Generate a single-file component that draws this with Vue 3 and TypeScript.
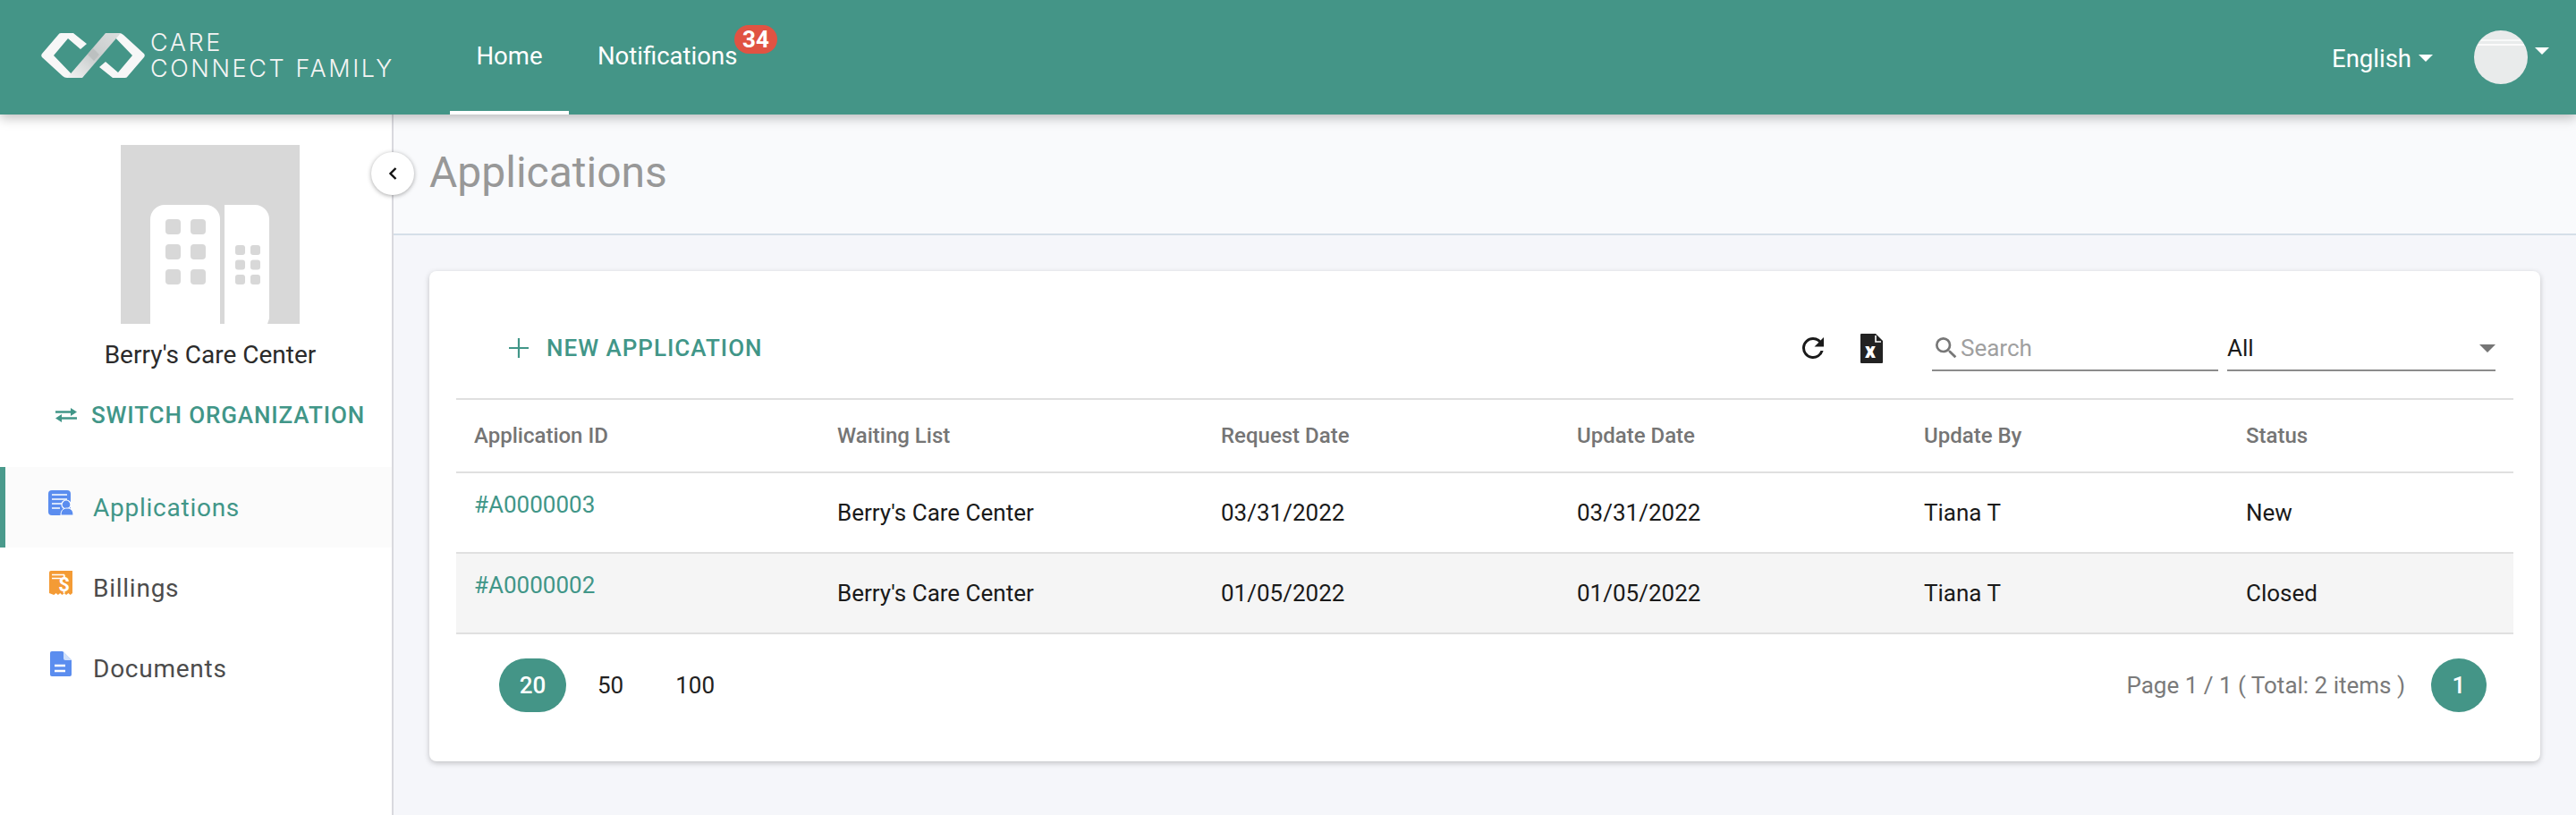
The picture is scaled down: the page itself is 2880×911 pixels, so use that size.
<template>
  <div class="app">
    <header class="topbar">
      <div class="brand">
        <svg class="brand-mark" viewBox="0 0 116 50" width="116" height="50">
          <defs>
            <linearGradient id="band" x1="0" y1="1" x2="1" y2="0">
              <stop offset="0" stop-color="#f2f3f3" />
              <stop offset="0.5" stop-color="#c8cccc" />
              <stop offset="1" stop-color="#dcdede" />
            </linearGradient>
          </defs>
          <path d="M22 0H36L51 12L44 18L30 6L14 25L38 50H29Q26 50 24 48L1 27Q-.5 25 1 23L19 2Q20 0 22 0Z" fill="#f7f7f7" />
          <path d="M94 50H80L65 38L72 32L86 44L102 25L78 0H87Q90 0 92 2L115 23Q116.500 25 115 27L97 48Q96 50 94 50Z" fill="#f7f7f7" />
          <path d="M29 50 72 0H89L46 50Z" fill="url(#band)" />
          <path d="M52 24 58 17 65 24 59 31Z" fill="#bcc0c0" />
        </svg>
        <div class="brand-text">
          <span>CARE</span>
          <span>CONNECT FAMILY</span>
        </div>
      </div>
      <nav class="nav">
        <a class="nav-item active">Home</a>
        <a class="nav-item">
          Notifications
          <span class="badge">34</span>
        </a>
      </nav>
      <div class="topbar-right">
        <span class="lang">English<i class="caret"></i></span>
        <span class="avatar"></span>
        <i class="caret avatar-caret"></i>
      </div>
    </header>

    <div class="body">
      <aside class="sidebar">
        <div class="org-photo">
          <svg viewBox="0 0 200 200" width="200" height="200">
            <path d="M33 200V83a16 16 0 0 1 16-16h46a16 16 0 0 1 16 16v117z" fill="#fff" />
            <path d="M116 200V67h34a16 16 0 0 1 16 16v111l-2 6z" fill="#fff" transform="translate(0 0)" />
            <rect
              v-for="w in bigWindows"
              :key="w.key"
              :x="w.x"
              :y="w.y"
              width="17"
              height="17"
              rx="4"
              fill="#d8d8d8"
            />
            <rect
              v-for="w in smallWindows"
              :key="w.key"
              :x="w.x"
              :y="w.y"
              width="11"
              height="11"
              rx="3"
              fill="#d8d8d8"
            />
          </svg>
        </div>
        <div class="org-name">Berry's Care Center</div>
        <a class="switch-org">
          <svg viewBox="0 0 24 18" width="24" height="18">
            <path d="M0 5.500h18M24 12.500H6" fill="none" stroke="#419688" stroke-width="2.400" />
            <path d="M17 1l7 4.500-7 4.500zM7 8l-7 4.500 7 4.500z" fill="#419688" />
          </svg>
          SWITCH ORGANIZATION
        </a>
        <ul class="menu">
          <li class="menu-item selected">
            <svg viewBox="0 0 28 28" width="28" height="28">
              <rect x="0" y="0" width="25" height="28" rx="4" fill="#5b8def" />
              <path d="M4 5h17M4 10h17M4 15h12M4 20h9" stroke="#fff" stroke-width="1.500" />
              <circle cx="20" cy="16" r="5" fill="#5b8def" stroke="#fff" stroke-width="1.200" />
              <path d="M14 28c0-6 3-8 7-8s7 2 7 8z" fill="#5b8def" stroke="#fff" stroke-width="1" />
            </svg>
            <span>Applications</span>
          </li>
          <li class="menu-item">
            <svg viewBox="0 0 28 28" width="28" height="28">
              <path d="M1 2a2 2 0 0 1 2-2h24v25l-2.300 2-2.300-2-2.300 2-2.300-2-2.300 2-2.300-2-2.300 2-2.300-2-2.300 2L1 25z" fill="#f49b35" />
              <path d="M4 4.500h14M4 8.500h10" stroke="#fff" stroke-width="1.500" />
              <text x="18" y="23" text-anchor="middle" class="dollar">$</text>
            </svg>
            <span>Billings</span>
          </li>
          <li class="menu-item">
            <svg viewBox="0 0 28 28" width="28" height="28">
              <path d="M4 0h12l10 10v16a2 2 0 0 1-2 2H4a2 2 0 0 1-2-2V2a2 2 0 0 1 2-2z" fill="#5b8def" />
              <path d="M17 0v8a2 2 0 0 0 2 2h7z" fill="#cfe0fb" />
              <path d="M7 16h12M7 22h12" stroke="#fff" stroke-width="2.500" />
            </svg>
            <span>Documents</span>
          </li>
        </ul>
      </aside>

      <button class="collapse-btn">
        <svg viewBox="0 0 12 16" width="12" height="16">
          <path d="M9.500 2 3.500 8l6 6" fill="none" stroke="#111" stroke-width="2.400" />
        </svg>
      </button>

      <main class="content">
        <div class="page-head">
          <h1>Applications</h1>
        </div>
        <section class="card">
          <div class="toolbar">
            <a class="new-btn">
              <svg viewBox="0 0 22 22" width="22" height="22">
                <path d="M11 0v22M0 11h22" stroke="#419688" stroke-width="2.200" />
              </svg>
              NEW APPLICATION
            </a>
            <svg class="refresh" viewBox="0 0 24 24" width="36" height="36">
              <path
                d="M17.650 6.350A7.950 7.950 0 0 0 12 4a8 8 0 1 0 7.730 10h-2.080A6 6 0 1 1 12 6c1.660 0 3.140.690 4.220 1.780L13 11h7V4z"
                fill="#1a1a1a"
              />
            </svg>
            <svg class="excel" viewBox="0 0 25 33" width="25" height="33">
              <path d="M1 0h16l8 8v24a1 1 0 0 1-1 1H1a1 1 0 0 1-1-1V1a1 1 0 0 1 1-1z" fill="#222" />
              <path d="M17 2v7h6" fill="none" stroke="#fff" stroke-width="1.600" />
              <text x="11" y="27" text-anchor="middle" class="excel-x">x</text>
            </svg>
            <label class="search">
              <svg viewBox="0 0 24 24" width="32" height="32">
                <path
                  d="M15.500 14h-.790l-.280-.270A6.470 6.470 0 0 0 16 9.500 6.500 6.500 0 1 0 9.500 16c1.610 0 3.090-.590 4.230-1.570l.270.280v.790l5 4.990L20.490 19zm-6 0A4.490 4.490 0 0 1 5 9.500 4.490 4.490 0 0 1 9.500 5 4.490 4.490 0 0 1 14 9.500 4.490 4.490 0 0 1 9.500 14z"
                  fill="#777"
                />
              </svg>
              <input placeholder="Search" />
            </label>
            <div class="status-select">
              <span>All</span>
              <i class="select-arrow"></i>
            </div>
          </div>

          <table class="grid">
            <colgroup>
              <col v-for="w in colWidths" :key="w" :style="{ width: w + 'px' }" />
            </colgroup>
            <thead>
              <tr>
                <th v-for="h in headers" :key="h">{{ h }}</th>
              </tr>
            </thead>
            <tbody>
              <tr v-for="(row, i) in rows" :key="row.id" :class="{ striped: i % 2 === 1 }">
                <td class="id-cell"><a>{{ row.id }}</a></td>
                <td>{{ row.list }}</td>
                <td>{{ row.requested }}</td>
                <td>{{ row.updated }}</td>
                <td>{{ row.by }}</td>
                <td>{{ row.status }}</td>
              </tr>
            </tbody>
          </table>

          <div class="pager">
            <div class="sizes">
              <span v-for="s in pageSizes" :key="s" class="size" :class="{ current: s === 20 }">{{ s }}</span>
            </div>
            <div class="page-info">
              <span>Page 1 / 1 ( Total: 2 items )</span>
              <span class="page-num">1</span>
            </div>
          </div>
        </section>
      </main>
    </div>
  </div>
</template>

<script setup lang="ts">
interface Row {
  id: string
  list: string
  requested: string
  updated: string
  by: string
  status: string
}

const headers = ['Application ID', 'Waiting List', 'Request Date', 'Update Date', 'Update By', 'Status']
const colWidths = [406, 429, 398, 388, 360, 319]
const pageSizes = [20, 50, 100]

const rows: Row[] = [
  {
    id: '#A0000003',
    list: "Berry's Care Center",
    requested: '03/31/2022',
    updated: '03/31/2022',
    by: 'Tiana T',
    status: 'New'
  },
  {
    id: '#A0000002',
    list: "Berry's Care Center",
    requested: '01/05/2022',
    updated: '01/05/2022',
    by: 'Tiana T',
    status: 'Closed'
  }
]

// 楼的窗户
const bigWindows = [0, 1, 2].flatMap((r) =>
  [0, 1].map((c) => ({ key: `${r}-${c}`, x: 50 + c * 28, y: 83 + r * 28 }))
)
const smallWindows = [0, 1, 2].flatMap((r) =>
  [0, 1].map((c) => ({ key: `${r}-${c}`, x: 128 + c * 17, y: 112 + r * 16.500 }))
)
</script>

<style>
html,
body {
  margin: 0;
  background: #f5f6fa;
}
</style>

<style scoped>
.app {
  height: 911px;
  overflow: hidden;
  display: flex;
  flex-direction: column;
  font-family: Roboto, 'Liberation Sans', sans-serif;
  color: #212121;
}

.topbar {
  height: 128px;
  flex: none;
  display: flex;
  align-items: stretch;
  background: #449587;
  color: #fff;
  box-shadow: 0 4px 12px rgba(0, 0, 0, 0.25);
  position: relative;
  z-index: 2;
}

.brand {
  display: flex;
  align-items: center;
  gap: 6px;
  padding: 0 0 4px 46px;
  width: 457px;
  box-sizing: border-box;
}

.brand-mark {
  flex: none;
}

.brand-text {
  display: flex;
  flex-direction: column;
  font-family: Inter, sans-serif;
  font-weight: 300;
  font-size: 27px;
  line-height: 29px;
  letter-spacing: 2.600px;
  color: #f4f4f4;
  white-space: nowrap;
}

.nav {
  display: flex;
  margin-left: 46px;
}

.nav-item {
  position: relative;
  display: flex;
  align-items: center;
  justify-content: center;
  font-size: 27.500px;
  padding: 0 30px 4px;
  box-sizing: border-box;
}

.nav-item.active {
  width: 133px;
  padding: 0;
  margin-right: 32px;
  border-bottom: 4px solid #fff;
}

.nav-item + .nav-item {
  padding-left: 0;
}

.badge {
  position: absolute;
  left: 153px;
  top: 28px;
  width: 48px;
  height: 32px;
  border-radius: 16px;
  background: #e05343;
  font-size: 26px;
  font-weight: 700;
  line-height: 32px;
  text-align: center;
}

.topbar-right {
  margin-left: auto;
  display: flex;
  align-items: center;
  padding-right: 30px;
}

.lang {
  display: flex;
  align-items: center;
  font-size: 27.500px;
  margin-top: 2px;
  margin-right: 46px;
}

.caret {
  display: inline-block;
  width: 0;
  height: 0;
  border-left: 8px solid transparent;
  border-right: 8px solid transparent;
  border-top: 8px solid #fff;
  margin-left: 8px;
}

.avatar {
  width: 60px;
  height: 60px;
  border-radius: 50%;
  background: linear-gradient(
    to bottom,
    #e9ebeb 0 10px,
    #f8f9f9 10px 12px,
    #e9ebeb 12px 15px,
    #fbfbfb 15px 17px,
    #e9ebeb 17px
  );
}

.avatar-caret {
  margin-bottom: 14px;
}

.body {
  flex: 1;
  min-height: 0;
  display: flex;
  position: relative;
}

.sidebar {
  width: 440px;
  flex: none;
  box-sizing: border-box;
  background: #fff;
  border-right: 2px solid #d9d9de;
  display: flex;
  flex-direction: column;
  align-items: center;
  padding: 34px 0 0 32px;
}

.org-photo {
  width: 200px;
  height: 200px;
  background: #d8d8d8;
}

.org-photo svg {
  display: block;
}

.org-name {
  margin-top: 18px;
  font-size: 28px;
  line-height: 34px;
  color: #2b2b2b;
}

.switch-org {
  margin-top: 34px;
  display: flex;
  align-items: center;
  gap: 16px;
  font-size: 26px;
  font-weight: 500;
  letter-spacing: 0.900px;
  line-height: 32px;
  color: #419688;
  white-space: nowrap;
}

.menu {
  list-style: none;
  margin: 42px 0 0 -32px;
  padding: 0;
  width: calc(100% + 32px);
}

.menu-item {
  height: 90px;
  box-sizing: border-box;
  display: flex;
  align-items: center;
  gap: 22px;
  padding-left: 54px;
  font-size: 28px;
  letter-spacing: 0.750px;
  color: #4c4c4c;
}

.menu-item svg {
  flex: none;
  margin-bottom: 10px;
}

.menu-item.selected {
  background: #fbfbfb;
  border-left: 6px solid #4a9a8c;
  padding-left: 48px;
  color: #419688;
}

.dollar {
  font-family: Roboto, sans-serif;
  font-weight: 700;
  font-size: 22px;
  fill: #fff;
}

.excel-x {
  font-family: Roboto, sans-serif;
  font-weight: 900;
  font-size: 23px;
  fill: #fff;
}

.collapse-btn {
  position: absolute;
  left: 415px;
  top: 42px;
  width: 48px;
  height: 48px;
  padding: 0;
  border: none;
  border-radius: 50%;
  background: #fff;
  box-shadow: 0 1px 5px rgba(0, 0, 0, 0.35);
  display: flex;
  align-items: center;
  justify-content: center;
}

.content {
  flex: 1;
  min-width: 0;
}

.page-head {
  height: 135px;
  box-sizing: border-box;
  background: #f9fafc;
  border-bottom: 2px solid #d5dfe8;
  padding: 0 40px 4px;
  display: flex;
  align-items: center;
}

.page-head h1 {
  margin: 0;
  font-size: 48px;
  font-weight: 400;
  color: #989898;
}

.card {
  margin: 40px 40px 0;
  width: 2360px;
  height: 548px;
  box-sizing: border-box;
  background: #fff;
  border-radius: 8px;
  box-shadow: 0 2px 6px rgba(0, 0, 0, 0.22);
  padding: 0 30px;
}

.toolbar {
  height: 142px;
  display: flex;
  align-items: center;
  padding: 30px 20px 0 59px;
  box-sizing: border-box;
}

.new-btn {
  display: flex;
  align-items: center;
  gap: 20px;
  font-size: 26px;
  font-weight: 500;
  letter-spacing: 1px;
  color: #419688;
  margin-right: auto;
}

.refresh {
  margin-right: 35px;
}

.excel {
  margin-right: 55px;
}

.search {
  width: 320px;
  height: 50px;
  margin-right: 10px;
  border-bottom: 2px solid #8c8c8c;
  display: flex;
  align-items: center;
  gap: 0;
  padding-left: 0;
  box-sizing: border-box;
  margin-top: 2px;
}

.search input {
  border: none;
  outline: none;
  background: none;
  padding: 0;
  width: 240px;
  font-family: inherit;
  font-size: 26px;
  color: #212121;
}

.search input::placeholder {
  color: #a0a0a0;
  opacity: 1;
}

.status-select {
  width: 300px;
  height: 50px;
  margin-top: 2px;
  border-bottom: 2px solid #8c8c8c;
  display: flex;
  align-items: center;
  justify-content: space-between;
  box-sizing: border-box;
  font-size: 26px;
  color: #1a1a1a;
}

.select-arrow {
  width: 0;
  height: 0;
  border-left: 9px solid transparent;
  border-right: 9px solid transparent;
  border-top: 9px solid #757575;
}

.grid {
  width: 2300px;
  table-layout: fixed;
  border-collapse: collapse;
  border-top: 2px solid #e0e0e0;
}

.grid th {
  height: 80px;
  padding: 0 20px;
  text-align: left;
  font-size: 24px;
  font-weight: 500;
  color: #757575;
  border-bottom: 2px solid #e0e0e0;
}

.grid td {
  height: 90px;
  box-sizing: border-box;
  padding: 0 20px;
  font-size: 26px;
  color: #1a1a1a;
  border-bottom: 2px solid #e0e0e0;
}

.grid td.id-cell {
  padding: 0 20px 18px;
}

.id-cell a {
  color: #419688;
}

.striped td {
  background: #f5f5f5;
}

.pager {
  display: flex;
  align-items: center;
  justify-content: space-between;
  padding: 27px 30px 0 48px;
}

.sizes {
  display: flex;
  align-items: center;
}

.size {
  min-width: 26px;
  height: 60px;
  display: flex;
  align-items: center;
  justify-content: center;
  font-size: 26px;
  padding: 0 23px;
  margin-right: 12px;
  border-radius: 30px;
}

.size.current {
  background: #449587;
  color: #fff;
  font-weight: 500;
  width: 75px;
  padding: 0;
}

.page-info {
  display: flex;
  align-items: center;
  gap: 29px;
  font-size: 26px;
  color: #7a7a7a;
}

.page-num {
  width: 62px;
  height: 60px;
  border-radius: 50%;
  background: #449587;
  color: #fff;
  font-weight: 500;
  display: flex;
  align-items: center;
  justify-content: center;
}
</style>
